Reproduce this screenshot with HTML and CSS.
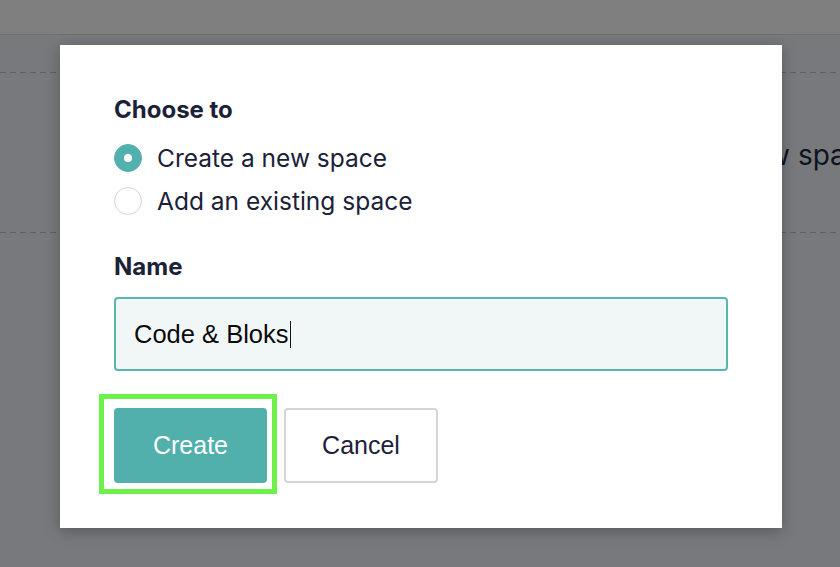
FILE: index.html
```html
<!DOCTYPE html>
<html lang="en">
<head>
<meta charset="utf-8">
<title>Choose to</title>
<link rel="stylesheet" href="styles.css">
</head>
<body>
<div class="page">
  <header class="topbar"></header>
  <main class="content">
    <div class="space-row">
      <span class="space-lead">Create a new</span><span class="space-tail">&nbsp;space</span>
    </div>
  </main>
</div>

<div class="modal" role="dialog" aria-label="Choose to">
  <h2 class="label">Choose to</h2>
  <div class="options">
    <label class="option">
      <span class="radio radio-checked"></span>
      <span class="option-text">Create a new space</span>
    </label>
    <label class="option">
      <span class="radio"></span>
      <span class="option-text">Add an existing space</span>
    </label>
  </div>
  <h2 class="label label-name">Name</h2>
  <div class="textbox" role="textbox">Code &amp; Bloks<span class="caret"></span></div>
  <div class="actions">
    <button class="btn btn-primary">Create</button>
    <button class="btn btn-secondary">Cancel</button>
  </div>
</div>
</body>
</html>
```
FILE: styles.css
```css
* { box-sizing: border-box; }

html, body {
  margin: 0;
  padding: 0;
}

body {
  width: 840px;
  height: 567px;
  overflow: hidden;
  background: #78797c;
  font-family: Inter, "Noto Sans", sans-serif;
  color: #1b2238;
}

.page {
  height: 567px;
}

.topbar {
  height: 35px;
  background: #7f7f7f;
  border-bottom: 1px solid #707072;
}

.content {
  padding-top: 37px;
}

.space-row {
  height: 161px;
  display: flex;
  align-items: center;
  padding-top: 4px;
  white-space: nowrap;
  font-size: 28px;
  color: #0e1320;
  background:
    repeating-linear-gradient(90deg, #5e5f62 0 6px, transparent 6px 10px) top left / 100% 1px no-repeat,
    repeating-linear-gradient(90deg, #5e5f62 0 6px, transparent 6px 10px) bottom left / 100% 1px no-repeat;
}

.space-lead {
  display: inline-block;
  width: 790px;
  text-align: right;
  flex: none;
}

.space-tail {
  flex: none;
}

.modal {
  position: absolute;
  left: 60px;
  top: 45px;
  width: 722px;
  height: 483px;
  background: #ffffff;
  box-shadow: 0 3px 14px rgba(0, 0, 0, 0.28);
  padding: 51px 54px 0 54px;
}

.label {
  margin: 0;
  font-size: 24px;
  line-height: 28px;
  font-weight: 700;
  color: #1b2238;
}

.options {
  margin-top: 12px;
  display: flex;
  flex-direction: column;
}

.option {
  height: 43px;
  display: flex;
  align-items: center;
  gap: 15px;
}

.radio {
  width: 28px;
  height: 28px;
  border-radius: 50%;
  border: 1.5px solid #d3d3d6;
  background: #ffffff;
  display: flex;
  align-items: center;
  justify-content: center;
  flex: none;
}

.radio-checked {
  background: #52b0ad;
  border-color: #52b0ad;
}

.radio-checked::after {
  content: "";
  width: 8px;
  height: 8px;
  border-radius: 50%;
  background: #ffffff;
}

.option-text {
  font-size: 24.5px;
  line-height: 28px;
  color: #1b2238;
}

.label-name {
  margin-top: 31px;
}

.textbox {
  margin-top: 16px;
  width: 614px;
  height: 74px;
  border: 2px solid #5ab4b0;
  border-radius: 4px;
  background: #f1f7f7;
  padding: 0 18px;
  display: flex;
  align-items: center;
  font-family: "Liberation Sans", Arial, sans-serif;
  font-size: 25.5px;
  color: #0a0a0a;
}

.caret {
  display: inline-block;
  width: 1.5px;
  height: 27px;
  background: #111111;
  margin-left: 1px;
}

.actions {
  margin-top: 37px;
  display: flex;
  gap: 17px;
}

.btn {
  height: 75px;
  border-radius: 4px;
  font-family: "Liberation Sans", Arial, sans-serif;
  font-size: 25px;
  padding: 0;
  cursor: pointer;
}

.btn-primary {
  position: relative;
  width: 153px;
  background: #51afac;
  border: none;
  color: #ffffff;
}

.btn-primary::after {
  content: "";
  position: absolute;
  left: -15px;
  top: -14px;
  right: -10px;
  bottom: -11px;
  border: 5px solid #6ef24b;
}

.btn-secondary {
  width: 154px;
  background: #ffffff;
  border: 2px solid #d5d5d5;
  color: #1b2238;
}
```
